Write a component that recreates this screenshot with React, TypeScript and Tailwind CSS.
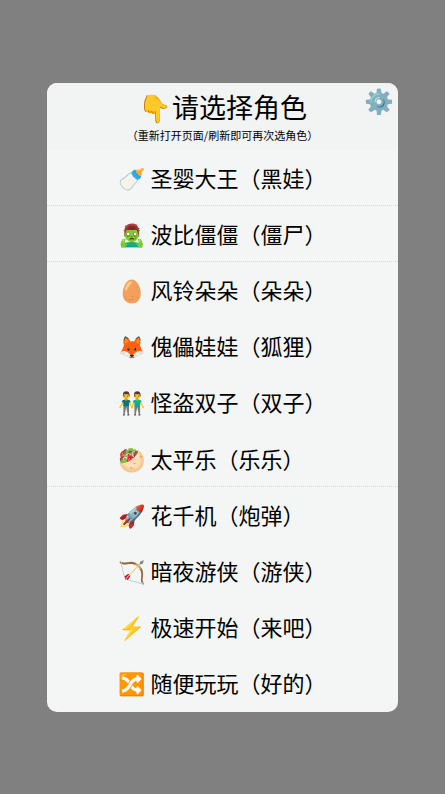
type Role = { icon: string; name: string; divided?: boolean };

const roles: Role[] = [
  { icon: "🍼", name: "圣婴大王（黑娃）", divided: true },
  { icon: "🧟‍♂️", name: "波比僵僵（僵尸）", divided: true },
  { icon: "🥚", name: "风铃朵朵（朵朵）" },
  { icon: "🦊", name: "傀儡娃娃（狐狸）" },
  { icon: "👬", name: "怪盗双子（双子）" },
  { icon: "🥙", name: "太平乐（乐乐）", divided: true },
  { icon: "🚀", name: "花千机（炮弹）" },
  { icon: "🏹", name: "暗夜游侠（游侠）" },
  { icon: "⚡", name: "极速开始（来吧）" },
  { icon: "🔀", name: "随便玩玩（好的）" },
];

export default function App() {
  return (
    <main className="flex min-h-screen items-center justify-center bg-[#808080] font-['Noto_Sans_CJK_SC',sans-serif] text-black">
      <section className="relative w-[79%] overflow-hidden rounded-[10px] bg-[#f4f6f6]">
        <header className="flex flex-col items-center bg-[#f2f3f3] pt-1.5 pb-1">
          <h1 className="text-[27px] leading-[35px]">👇请选择角色</h1>
          <p className="text-[11px] leading-[22px]">（重新打开页面/刷新即可再次选角色）</p>
        </header>
        <button type="button" aria-label="设置" className="absolute top-0.5 right-1 text-[24px] leading-[30px]">
          ⚙️
        </button>
        <ul className="grid min-h-[562px] auto-rows-fr">
          {roles.map((role) => (
            <li
              key={role.name}
              className={`border-b border-dotted ${role.divided ? "border-[#d9d9da]" : "border-transparent"}`}
            >
              <button type="button" className="flex h-full w-full items-center justify-center text-[22px]">
                <span className="w-[208px] text-left whitespace-nowrap">
                  {role.icon} {role.name}
                </span>
              </button>
            </li>
          ))}
        </ul>
      </section>
    </main>
  );
}
